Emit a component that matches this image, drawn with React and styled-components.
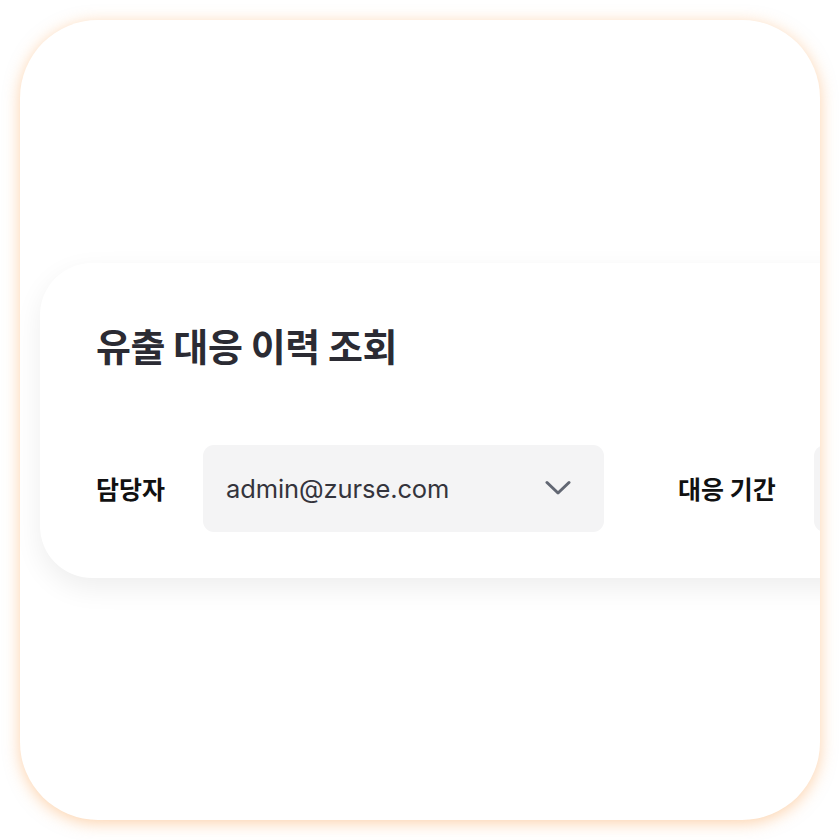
import React from "react";
import styled, { createGlobalStyle } from "styled-components";

const Global = createGlobalStyle`
  html, body { margin: 0; padding: 0; background: #ffffff; }
  body { font-family: Inter, "Noto Sans CJK KR", sans-serif; }
  * { box-sizing: border-box; }
`;

const Page = styled.div`
  width: 840px;
  height: 840px;
  padding: 20px;
`;

const Frame = styled.div`
  width: 800px;
  height: 800px;
  border-radius: 78px;
  background: #ffffff;
  box-shadow: 0 3px 16px rgba(251, 166, 88, 0.5);
  overflow: hidden;
  display: flex;
  align-items: center;
  padding-left: 20px;
`;

const Card = styled.section`
  flex-shrink: 0;
  width: 1100px;
  height: 315px;
  background: #ffffff;
  border-radius: 52px;
  box-shadow: 0 10px 28px rgba(0, 0, 0, 0.07);
  padding: 58px 56px 0 56px;
  display: flex;
  flex-direction: column;
`;

const Title = styled.h1`
  margin: 0;
  font-family: "Noto Sans CJK KR", sans-serif;
  font-size: 38px;
  line-height: 48px;
  font-weight: 600;
  color: #2b2b33;
  letter-spacing: -0.4px;
`;

const Row = styled.div`
  margin-top: 76px;
  display: flex;
  align-items: center;
`;

const Group = styled.div`
  display: flex;
  align-items: center;
  gap: 38px;
  margin-right: 74px;
`;

const Label = styled.span`
  font-family: "Noto Sans CJK KR", sans-serif;
  font-size: 25px;
  font-weight: 600;
  color: #111111;
  white-space: nowrap;
`;

const Select = styled.div`
  width: ${(p) => p.$w}px;
  height: 87px;
  border-radius: 11px;
  background: #f4f4f5;
  display: flex;
  align-items: center;
  justify-content: space-between;
  padding: 0 33px 0 23px;
  flex-shrink: 0;
`;

const Value = styled.span`
  font-family: Inter, sans-serif;
  font-size: 25.5px;
  color: #34343c;
  letter-spacing: -0.1px;
`;

const Chevron = () => (
  <svg width="26" height="16" viewBox="0 0 26 16" fill="none">
    <polyline
      points="2,2.5 13,13 24,2.5"
      stroke="#626773"
      strokeWidth="3"
      strokeLinecap="round"
      strokeLinejoin="round"
    />
  </svg>
);

export default function App() {
  return (
    <>
      <Global />
      <Page>
        <Frame>
          <Card>
            <Title>유출 대응 이력 조회</Title>
            <Row>
              <Group>
                <Label>담당자</Label>
                <Select $w={401}>
                  <Value>admin@zurse.com</Value>
                  <Chevron />
                </Select>
              </Group>
              <Group>
                <Label>대응 기간</Label>
                <Select $w={300} />
              </Group>
            </Row>
          </Card>
        </Frame>
      </Page>
    </>
  );
}
